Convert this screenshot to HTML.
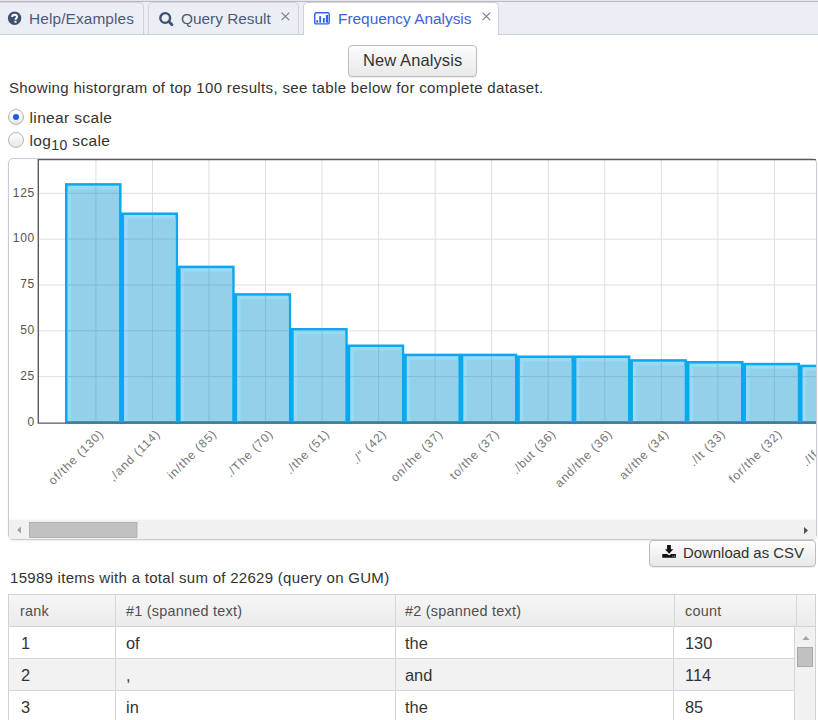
<!DOCTYPE html>
<html><head><meta charset="utf-8">
<style>
*{box-sizing:border-box}
html,body{margin:0;padding:0;width:818px;height:720px;overflow:hidden;background:#fff;font-family:"Liberation Sans", sans-serif;color:#333}
.abs{position:absolute}
#tabbar{position:absolute;left:0;top:0;width:818px;height:34px;background:#eceef6;border-top:1px solid #e4e6ec}
#tabbar .topline{position:absolute;left:0;top:0px;width:818px;height:1px;background:#b9bbc0}
#tabbar .botline{position:absolute;left:0;top:33px;width:818px;height:1px;background:#cdd0d8}
.tab{position:absolute;top:1px;height:32px;border:1px solid #cfd2da;border-bottom:none;border-radius:5px 5px 0 0;background:#eceef6}
.tab.active{background:#fff;height:33px}
.tabtxt{position:absolute;white-space:nowrap;font-size:15.4px;color:#4d5a78}
.x{position:absolute;font-size:15px;color:#5d6a86}
.btn{position:absolute;border:1px solid #bdbdbd;border-radius:4px;background:linear-gradient(#fdfdfd,#e8e8e8);box-shadow:0 1px 1px rgba(0,0,0,.08)}
.txt{position:absolute;white-space:nowrap;color:#333}
.radio{position:absolute;width:16px;height:16px;border-radius:50%;border:1px solid #b5b5b5;background:linear-gradient(#fff,#e6e6e6)}
#chart{position:absolute;left:8px;top:158px;width:809px;height:382px;border:1px solid #c9ccd4;border-radius:5px;box-shadow:0 1px 2px rgba(0,0,0,.08)}
table{border-collapse:collapse}
</style></head><body>
<div id="tabbar">
  <div class="topline"></div>
  <div class="tab" style="left:-6px;width:150px"></div>
  <div class="tab" style="left:148px;width:151px"></div>
  <div class="tab active" style="left:303px;width:196px"></div>
  <div class="botline" style="width:303px"></div>
  <div class="botline" style="left:499px;width:319px"></div>
  <svg class="abs" style="left:7px;top:10.3px" width="15" height="15" viewBox="0 0 15 15"><circle cx="7.6" cy="7.3" r="6.7" fill="#3f5070"/><path d="M5.2 5.9 C5.2 4.3 6.3 3.7 7.6 3.7 C9 3.7 10 4.5 10 5.7 C10 7.2 8.5 7.3 8.5 8.8" fill="none" stroke="#fff" stroke-width="2"/><rect x="7.5" y="9.8" width="2" height="1.9" fill="#fff"/></svg>
  <div class="tabtxt" style="left:29px;top:9px;letter-spacing:0.12px">Help/Examples</div>
  <svg class="abs" style="left:159px;top:10px" width="16" height="16" viewBox="0 0 16 16"><circle cx="6.2" cy="7" r="4.9" fill="none" stroke="#3f5070" stroke-width="2.4"/><path d="M9.8 10.6 L13 13.8" stroke="#3f5070" stroke-width="2.8" stroke-linecap="round"/></svg>
  <div class="tabtxt" style="left:181px;top:9px">Query Result</div>
  <svg class="abs" style="left:281.3px;top:10.6px" width="9" height="9" viewBox="0 0 9 9"><path d="M0.6 0.6 L8.2 8.2 M8.2 0.6 L0.6 8.2" stroke="#6d7995" stroke-width="1.05"/></svg>
  <svg class="abs" style="left:314px;top:11.3px" width="16" height="13" viewBox="0 0 16 13"><rect x="0.75" y="0.75" width="14.5" height="11.1" rx="1.4" fill="none" stroke="#2f66e8" stroke-width="1.4"/><rect x="2.3" y="8.2" width="1.85" height="2.5" fill="#2f66e8"/><rect x="5.25" y="4.1" width="1.85" height="6.6" fill="#2f66e8"/><rect x="8.9" y="6" width="1.85" height="4.7" fill="#2f66e8"/><rect x="11.85" y="3" width="2.2" height="7.7" fill="#2f66e8"/></svg>
  <div class="tabtxt" style="left:338px;top:9px;color:#3b63d8">Frequency Analysis</div>
  <svg class="abs" style="left:481.8px;top:10.6px" width="9" height="9" viewBox="0 0 9 9"><path d="M0.6 0.6 L8.2 8.2 M8.2 0.6 L0.6 8.2" stroke="#6d7995" stroke-width="1.05"/></svg>
</div>

<div class="btn" style="left:348px;top:45px;width:129px;height:32px"></div>
<div class="txt" style="left:363px;top:51px;font-size:16.5px;letter-spacing:0.1px;color:#333">New Analysis</div>

<div class="txt" style="left:9px;top:79px;font-size:15px;letter-spacing:0.34px">Showing historgram of top 100 results, see table below for complete dataset.</div>

<div class="radio" style="left:8px;top:109px"></div>
<div class="abs" style="left:13px;top:114.2px;width:6px;height:6px;border-radius:50%;background:#1a5ce6"></div>
<div class="txt" style="left:29.5px;top:109px;font-size:15.5px;letter-spacing:0.37px">linear scale</div>
<div class="radio" style="left:8px;top:132px"></div>
<div class="txt" style="left:29.5px;top:132px;font-size:15.5px;letter-spacing:0.37px">log<span style="font-size:14px;position:relative;top:4px">10</span> scale</div>

<div id="chart"></div>
<svg width="818" height="720" style="position:absolute;left:0;top:0">
<defs><clipPath id="cp"><rect x="9" y="159" width="807" height="360"/></clipPath></defs>
<g clip-path="url(#cp)">
<line x1="38" x2="816" y1="376.66" y2="376.66" stroke="#dedede" stroke-width="1"/>
<line x1="38" x2="816" y1="330.82" y2="330.82" stroke="#dedede" stroke-width="1"/>
<line x1="38" x2="816" y1="284.98" y2="284.98" stroke="#dedede" stroke-width="1"/>
<line x1="38" x2="816" y1="239.14" y2="239.14" stroke="#dedede" stroke-width="1"/>
<line x1="38" x2="816" y1="193.30" y2="193.30" stroke="#dedede" stroke-width="1"/>
<line x1="95.90" x2="95.90" y1="159" y2="422" stroke="#dedede" stroke-width="1"/>
<line x1="152.44" x2="152.44" y1="159" y2="422" stroke="#dedede" stroke-width="1"/>
<line x1="208.98" x2="208.98" y1="159" y2="422" stroke="#dedede" stroke-width="1"/>
<line x1="265.52" x2="265.52" y1="159" y2="422" stroke="#dedede" stroke-width="1"/>
<line x1="322.06" x2="322.06" y1="159" y2="422" stroke="#dedede" stroke-width="1"/>
<line x1="378.60" x2="378.60" y1="159" y2="422" stroke="#dedede" stroke-width="1"/>
<line x1="435.14" x2="435.14" y1="159" y2="422" stroke="#dedede" stroke-width="1"/>
<line x1="491.68" x2="491.68" y1="159" y2="422" stroke="#dedede" stroke-width="1"/>
<line x1="548.22" x2="548.22" y1="159" y2="422" stroke="#dedede" stroke-width="1"/>
<line x1="604.76" x2="604.76" y1="159" y2="422" stroke="#dedede" stroke-width="1"/>
<line x1="661.30" x2="661.30" y1="159" y2="422" stroke="#dedede" stroke-width="1"/>
<line x1="717.84" x2="717.84" y1="159" y2="422" stroke="#dedede" stroke-width="1"/>
<line x1="774.38" x2="774.38" y1="159" y2="422" stroke="#dedede" stroke-width="1"/>
<line x1="830.92" x2="830.92" y1="159" y2="422" stroke="#dedede" stroke-width="1"/>
<rect x="65.00" y="183.13" width="56.54" height="240.37" fill="#0aa8ee"/>
<rect x="67.50" y="185.63" width="51.54" height="235.37" fill="#9adaf6"/>
<rect x="71.00" y="189.13" width="48.04" height="231.87" fill="#93d0ea"/>
<rect x="120.74" y="212.47" width="57.34" height="211.03" fill="#0aa8ee"/>
<rect x="124.04" y="214.97" width="51.54" height="206.03" fill="#9adaf6"/>
<rect x="127.54" y="218.47" width="48.04" height="202.53" fill="#93d0ea"/>
<rect x="177.28" y="265.64" width="57.34" height="157.86" fill="#0aa8ee"/>
<rect x="180.58" y="268.14" width="51.54" height="152.86" fill="#9adaf6"/>
<rect x="184.08" y="271.64" width="48.04" height="149.36" fill="#93d0ea"/>
<rect x="233.82" y="293.15" width="57.34" height="130.35" fill="#0aa8ee"/>
<rect x="237.12" y="295.65" width="51.54" height="125.35" fill="#9adaf6"/>
<rect x="240.62" y="299.15" width="48.04" height="121.85" fill="#93d0ea"/>
<rect x="290.36" y="327.99" width="57.34" height="95.51" fill="#0aa8ee"/>
<rect x="293.66" y="330.49" width="51.54" height="90.51" fill="#9adaf6"/>
<rect x="297.16" y="333.99" width="48.04" height="87.01" fill="#93d0ea"/>
<rect x="346.90" y="344.49" width="57.34" height="79.01" fill="#0aa8ee"/>
<rect x="350.20" y="346.99" width="51.54" height="74.01" fill="#9adaf6"/>
<rect x="353.70" y="350.49" width="48.04" height="70.51" fill="#93d0ea"/>
<rect x="403.44" y="353.66" width="57.34" height="69.84" fill="#0aa8ee"/>
<rect x="406.74" y="356.16" width="51.54" height="64.84" fill="#9adaf6"/>
<rect x="410.24" y="359.66" width="48.04" height="61.34" fill="#93d0ea"/>
<rect x="459.98" y="353.66" width="57.34" height="69.84" fill="#0aa8ee"/>
<rect x="463.28" y="356.16" width="51.54" height="64.84" fill="#9adaf6"/>
<rect x="466.78" y="359.66" width="48.04" height="61.34" fill="#93d0ea"/>
<rect x="516.52" y="355.49" width="57.34" height="68.01" fill="#0aa8ee"/>
<rect x="519.82" y="357.99" width="51.54" height="63.01" fill="#9adaf6"/>
<rect x="523.32" y="361.49" width="48.04" height="59.51" fill="#93d0ea"/>
<rect x="573.06" y="355.49" width="57.34" height="68.01" fill="#0aa8ee"/>
<rect x="576.36" y="357.99" width="51.54" height="63.01" fill="#9adaf6"/>
<rect x="579.86" y="361.49" width="48.04" height="59.51" fill="#93d0ea"/>
<rect x="629.60" y="359.16" width="57.34" height="64.34" fill="#0aa8ee"/>
<rect x="632.90" y="361.66" width="51.54" height="59.34" fill="#9adaf6"/>
<rect x="636.40" y="365.16" width="48.04" height="55.84" fill="#93d0ea"/>
<rect x="686.14" y="360.99" width="57.34" height="62.51" fill="#0aa8ee"/>
<rect x="689.44" y="363.49" width="51.54" height="57.51" fill="#9adaf6"/>
<rect x="692.94" y="366.99" width="48.04" height="54.01" fill="#93d0ea"/>
<rect x="742.68" y="362.82" width="57.34" height="60.68" fill="#0aa8ee"/>
<rect x="745.98" y="365.32" width="51.54" height="55.68" fill="#9adaf6"/>
<rect x="749.48" y="368.82" width="48.04" height="52.18" fill="#93d0ea"/>
<rect x="799.22" y="364.66" width="57.34" height="58.84" fill="#0aa8ee"/>
<rect x="802.52" y="367.16" width="51.54" height="53.84" fill="#9adaf6"/>
<rect x="806.02" y="370.66" width="48.04" height="50.34" fill="#93d0ea"/>
<line x1="67.50" x2="119.04" y1="376.66" y2="376.66" stroke="#82bcd6" stroke-width="1"/>
<line x1="124.04" x2="175.58" y1="376.66" y2="376.66" stroke="#82bcd6" stroke-width="1"/>
<line x1="180.58" x2="232.12" y1="376.66" y2="376.66" stroke="#82bcd6" stroke-width="1"/>
<line x1="237.12" x2="288.66" y1="376.66" y2="376.66" stroke="#82bcd6" stroke-width="1"/>
<line x1="293.66" x2="345.20" y1="376.66" y2="376.66" stroke="#82bcd6" stroke-width="1"/>
<line x1="350.20" x2="401.74" y1="376.66" y2="376.66" stroke="#82bcd6" stroke-width="1"/>
<line x1="406.74" x2="458.28" y1="376.66" y2="376.66" stroke="#82bcd6" stroke-width="1"/>
<line x1="463.28" x2="514.82" y1="376.66" y2="376.66" stroke="#82bcd6" stroke-width="1"/>
<line x1="519.82" x2="571.36" y1="376.66" y2="376.66" stroke="#82bcd6" stroke-width="1"/>
<line x1="576.36" x2="627.90" y1="376.66" y2="376.66" stroke="#82bcd6" stroke-width="1"/>
<line x1="632.90" x2="684.44" y1="376.66" y2="376.66" stroke="#82bcd6" stroke-width="1"/>
<line x1="689.44" x2="740.98" y1="376.66" y2="376.66" stroke="#82bcd6" stroke-width="1"/>
<line x1="745.98" x2="797.52" y1="376.66" y2="376.66" stroke="#82bcd6" stroke-width="1"/>
<line x1="802.52" x2="854.06" y1="376.66" y2="376.66" stroke="#82bcd6" stroke-width="1"/>
<line x1="67.50" x2="119.04" y1="330.82" y2="330.82" stroke="#82bcd6" stroke-width="1"/>
<line x1="124.04" x2="175.58" y1="330.82" y2="330.82" stroke="#82bcd6" stroke-width="1"/>
<line x1="180.58" x2="232.12" y1="330.82" y2="330.82" stroke="#82bcd6" stroke-width="1"/>
<line x1="237.12" x2="288.66" y1="330.82" y2="330.82" stroke="#82bcd6" stroke-width="1"/>
<line x1="293.66" x2="345.20" y1="330.82" y2="330.82" stroke="#82bcd6" stroke-width="1"/>
<line x1="67.50" x2="119.04" y1="284.98" y2="284.98" stroke="#82bcd6" stroke-width="1"/>
<line x1="124.04" x2="175.58" y1="284.98" y2="284.98" stroke="#82bcd6" stroke-width="1"/>
<line x1="180.58" x2="232.12" y1="284.98" y2="284.98" stroke="#82bcd6" stroke-width="1"/>
<line x1="67.50" x2="119.04" y1="239.14" y2="239.14" stroke="#82bcd6" stroke-width="1"/>
<line x1="124.04" x2="175.58" y1="239.14" y2="239.14" stroke="#82bcd6" stroke-width="1"/>
<line x1="67.50" x2="119.04" y1="193.30" y2="193.30" stroke="#82bcd6" stroke-width="1"/>
<line x1="95.90" x2="95.90" y1="185.63" y2="420.5" stroke="#82bcd6" stroke-width="1"/>
<line x1="152.44" x2="152.44" y1="214.97" y2="420.5" stroke="#82bcd6" stroke-width="1"/>
<line x1="208.98" x2="208.98" y1="268.14" y2="420.5" stroke="#82bcd6" stroke-width="1"/>
<line x1="265.52" x2="265.52" y1="295.65" y2="420.5" stroke="#82bcd6" stroke-width="1"/>
<line x1="322.06" x2="322.06" y1="330.49" y2="420.5" stroke="#82bcd6" stroke-width="1"/>
<line x1="378.60" x2="378.60" y1="346.99" y2="420.5" stroke="#82bcd6" stroke-width="1"/>
<line x1="435.14" x2="435.14" y1="356.16" y2="420.5" stroke="#82bcd6" stroke-width="1"/>
<line x1="491.68" x2="491.68" y1="356.16" y2="420.5" stroke="#82bcd6" stroke-width="1"/>
<line x1="548.22" x2="548.22" y1="357.99" y2="420.5" stroke="#82bcd6" stroke-width="1"/>
<line x1="604.76" x2="604.76" y1="357.99" y2="420.5" stroke="#82bcd6" stroke-width="1"/>
<line x1="661.30" x2="661.30" y1="361.66" y2="420.5" stroke="#82bcd6" stroke-width="1"/>
<line x1="717.84" x2="717.84" y1="363.49" y2="420.5" stroke="#82bcd6" stroke-width="1"/>
<line x1="774.38" x2="774.38" y1="365.32" y2="420.5" stroke="#82bcd6" stroke-width="1"/>
<line x1="830.92" x2="830.92" y1="367.16" y2="420.5" stroke="#82bcd6" stroke-width="1"/>
<line x1="38" x2="816" y1="159.5" y2="159.5" stroke="#5a5a5a" stroke-width="1.4"/>
<line x1="38.3" x2="38.3" y1="159" y2="423.5" stroke="#5a5a5a" stroke-width="1.4"/>
<line x1="38" x2="816" y1="423.2" y2="423.2" stroke="#5a5a5a" stroke-width="1.3"/>
<text x="34.7" y="425.70" text-anchor="end" font-family='"Liberation Sans", sans-serif' font-size="12" letter-spacing="0.6" fill="#555">0</text>
<text x="34.7" y="379.86" text-anchor="end" font-family='"Liberation Sans", sans-serif' font-size="12" letter-spacing="0.6" fill="#555">25</text>
<text x="34.7" y="334.02" text-anchor="end" font-family='"Liberation Sans", sans-serif' font-size="12" letter-spacing="0.6" fill="#555">50</text>
<text x="34.7" y="288.18" text-anchor="end" font-family='"Liberation Sans", sans-serif' font-size="12" letter-spacing="0.6" fill="#555">75</text>
<text x="34.7" y="242.34" text-anchor="end" font-family='"Liberation Sans", sans-serif' font-size="12" letter-spacing="0.6" fill="#555">100</text>
<text x="34.7" y="196.50" text-anchor="end" font-family='"Liberation Sans", sans-serif' font-size="12" letter-spacing="0.6" fill="#555">125</text>
<text transform="translate(104.40,434.5) rotate(-45)" text-anchor="end" font-family='"Liberation Sans", sans-serif' font-size="12" letter-spacing="0.9" fill="#747474">of/the (130)</text>
<text transform="translate(160.94,434.5) rotate(-45)" text-anchor="end" font-family='"Liberation Sans", sans-serif' font-size="12" letter-spacing="0.9" fill="#747474">,/and (114)</text>
<text transform="translate(217.48,434.5) rotate(-45)" text-anchor="end" font-family='"Liberation Sans", sans-serif' font-size="12" letter-spacing="0.9" fill="#747474">in/the (85)</text>
<text transform="translate(274.02,434.5) rotate(-45)" text-anchor="end" font-family='"Liberation Sans", sans-serif' font-size="12" letter-spacing="0.9" fill="#747474">./The (70)</text>
<text transform="translate(330.56,434.5) rotate(-45)" text-anchor="end" font-family='"Liberation Sans", sans-serif' font-size="12" letter-spacing="0.9" fill="#747474">./the (51)</text>
<text transform="translate(387.10,434.5) rotate(-45)" text-anchor="end" font-family='"Liberation Sans", sans-serif' font-size="12" letter-spacing="0.9" fill="#747474">./&quot; (42)</text>
<text transform="translate(443.64,434.5) rotate(-45)" text-anchor="end" font-family='"Liberation Sans", sans-serif' font-size="12" letter-spacing="0.9" fill="#747474">on/the (37)</text>
<text transform="translate(500.18,434.5) rotate(-45)" text-anchor="end" font-family='"Liberation Sans", sans-serif' font-size="12" letter-spacing="0.9" fill="#747474">to/the (37)</text>
<text transform="translate(556.72,434.5) rotate(-45)" text-anchor="end" font-family='"Liberation Sans", sans-serif' font-size="12" letter-spacing="0.9" fill="#747474">./but (36)</text>
<text transform="translate(613.26,434.5) rotate(-45)" text-anchor="end" font-family='"Liberation Sans", sans-serif' font-size="12" letter-spacing="0.9" fill="#747474">and/the (36)</text>
<text transform="translate(669.80,434.5) rotate(-45)" text-anchor="end" font-family='"Liberation Sans", sans-serif' font-size="12" letter-spacing="0.9" fill="#747474">at/the (34)</text>
<text transform="translate(726.34,434.5) rotate(-45)" text-anchor="end" font-family='"Liberation Sans", sans-serif' font-size="12" letter-spacing="0.9" fill="#747474">./It (33)</text>
<text transform="translate(782.88,434.5) rotate(-45)" text-anchor="end" font-family='"Liberation Sans", sans-serif' font-size="12" letter-spacing="0.9" fill="#747474">for/the (32)</text>
<text transform="translate(839.42,434.5) rotate(-45)" text-anchor="end" font-family='"Liberation Sans", sans-serif' font-size="12" letter-spacing="0.9" fill="#747474">./If (31)</text>
</g>
<rect x="9" y="519.7" width="807" height="19.3" fill="#f1f1f1"/>
<rect x="29.5" y="522.4" width="107.5" height="15" fill="#c1c1c1" stroke="#a8a8a8" stroke-width="0.8"/>
<path d="M17 530 L21 526.5 L21 533.5 Z" fill="#a3a3a3"/>
<path d="M808 530.5 L804 527 L804 534 Z" fill="#505050"/>
</svg>

<div class="btn" style="left:649px;top:540px;width:167px;height:26.5px"></div>
<svg class="abs" style="left:662px;top:544px" width="15" height="15" viewBox="0 0 15 15"><path d="M5.1 1 H8.9 V5.3 H11.3 L7.1 9.7 L3 5.3 H5.1 Z" fill="#111"/><path d="M0.25 10 H5.2 L7.1 11.6 L9.1 10 H13.9 V13.8 H0.25 Z" fill="#111"/><rect x="10.4" y="11.7" width="0.9" height="0.9" fill="#ddd"/><rect x="12" y="11.7" width="0.9" height="0.9" fill="#ddd"/></svg>
<div class="txt" style="left:683px;top:544.7px;font-size:14.9px;color:#333">Download as CSV</div>

<div class="txt" style="left:10px;top:569px;font-size:15px;letter-spacing:0.29px">15989 items with a total sum of 22629 (query on GUM)</div>

<div id="tbl" class="abs" style="left:8px;top:594px;width:808px;height:126px;border:1px solid #d2d2d2;border-bottom:none;overflow:hidden">
  <div class="abs" style="left:0;top:0;width:808px;height:32px;background:linear-gradient(#f6f6f6,#ebebeb);border-bottom:1px solid #d2d2d2"></div>
  <div class="abs" style="left:0;top:64px;width:785px;height:32px;background:#f2f2f2"></div>
  <div class="abs" style="left:0;top:63px;width:785px;height:1px;background:#d6d6d6"></div>
  <div class="abs" style="left:0;top:95px;width:785px;height:1px;background:#d6d6d6"></div>
  <div class="abs" style="left:106px;top:0;width:1px;height:126px;background:#d6d6d6"></div>
  <div class="abs" style="left:386px;top:0;width:1px;height:126px;background:#d6d6d6"></div>
  <div class="abs" style="left:665px;top:0;width:1px;height:32px;background:#d6d6d6"></div><div class="abs" style="left:664px;top:32px;width:1px;height:94px;background:#d6d6d6"></div>
  <div class="abs" style="left:787px;top:0;width:1px;height:32px;background:#d6d6d6"></div>
  <div class="abs" style="left:785px;top:32px;width:22px;height:94px;background:#f1f1f1;border-left:1px solid #d6d6d6"></div>
  <div class="abs" style="left:788px;top:52px;width:16px;height:20px;background:#c1c1c1;border:1px solid #aaa"></div>
  <svg class="abs" style="left:792.5px;top:40px" width="8" height="6"><path d="M0.5 5 L4 1 L7.5 5 Z" fill="#a3a3a3"/></svg>
  <div class="txt" style="left:11px;top:8px;font-size:14.4px;letter-spacing:0.25px;color:#505050">rank</div>
  <div class="txt" style="left:117px;top:8px;font-size:14.4px;letter-spacing:0.25px;color:#505050">#1 (spanned text)</div>
  <div class="txt" style="left:396px;top:8px;font-size:14.4px;letter-spacing:0.25px;color:#505050">#2 (spanned text)</div>
  <div class="txt" style="left:676px;top:8px;font-size:14.4px;letter-spacing:0.25px;color:#505050">count</div>
  <div class="txt" style="left:12px;top:39px;font-size:16.4px">1</div>
  <div class="txt" style="left:117px;top:39px;font-size:16.4px">of</div>
  <div class="txt" style="left:396px;top:39px;font-size:16.4px">the</div>
  <div class="txt" style="left:676px;top:39px;font-size:16.4px">130</div>
  <div class="txt" style="left:12px;top:71px;font-size:16.4px">2</div>
  <div class="txt" style="left:117px;top:71px;font-size:16.4px">,</div>
  <div class="txt" style="left:396px;top:71px;font-size:16.4px">and</div>
  <div class="txt" style="left:676px;top:71px;font-size:16.4px">114</div>
  <div class="txt" style="left:12px;top:103px;font-size:16.4px">3</div>
  <div class="txt" style="left:117px;top:103px;font-size:16.4px">in</div>
  <div class="txt" style="left:396px;top:103px;font-size:16.4px">the</div>
  <div class="txt" style="left:676px;top:103px;font-size:16.4px">85</div>
</div>
</body></html>
